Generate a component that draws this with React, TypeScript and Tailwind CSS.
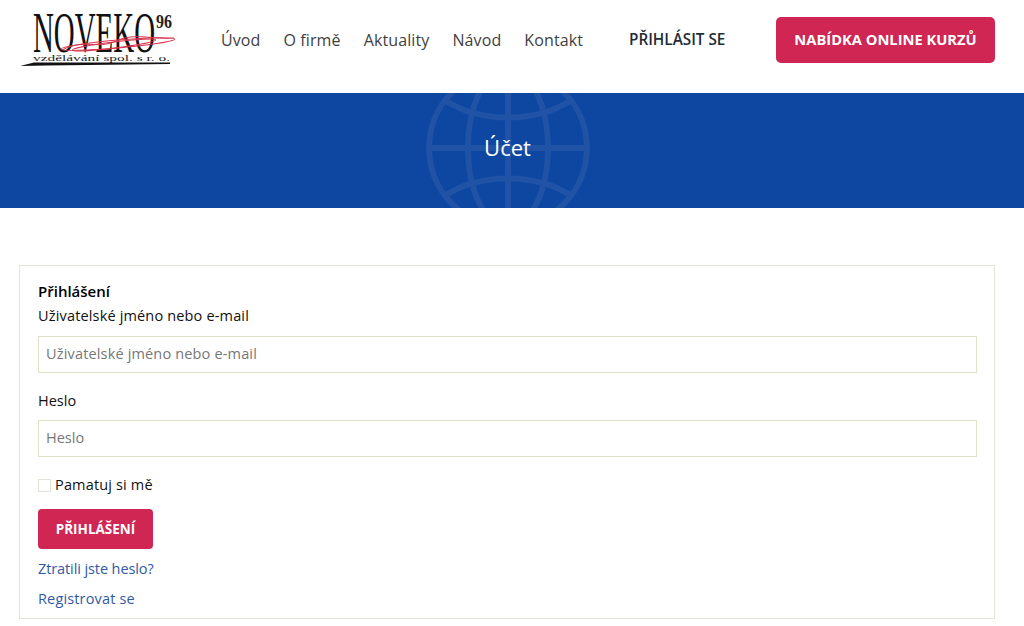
import React from "react";

const font = { fontFamily: '"Open Sans", sans-serif' };

const Logo = () => (
  <svg width="160" height="56" viewBox="0 0 160 56" className="block shrink-0">
    <text x="17" y="40" fontFamily="Liberation Serif" fontSize="58" textLength="122" lengthAdjust="spacingAndGlyphs" fill="#111">NOVEKO</text>
    <g fill="none" stroke="#d8324c" strokeWidth="1">
      <ellipse cx="102" cy="32" rx="57" ry="4" transform="rotate(-5 102 32)" />
      <ellipse cx="98" cy="33" rx="42" ry="3" transform="rotate(-7 98 33)" />
      <path d="M46 38 C70 26 80 38 100 29 S135 28 158 26" />
    </g>
    <text x="140" y="16" fontFamily="Liberation Serif" fontWeight="700" fontSize="18" textLength="16" lengthAdjust="spacingAndGlyphs" fill="#222">96</text>
    <text x="17" y="49" fontFamily="Liberation Serif" fontSize="9" textLength="137" lengthAdjust="spacingAndGlyphs" fill="#222">vzdělávání spol. s r. o.</text>
    <path d="M4 54 L18 50.5 L154 50.5 L154 52 L30 53.5 Z" fill="#111" />
  </svg>
);

const Globe = () => (
  <svg width="164" height="115" viewBox="0 0 164 115" fill="none" stroke="#2052a5" strokeWidth="6" className="absolute left-[426px] top-0">
    <circle cx="82" cy="55" r="79" />
    <ellipse cx="82" cy="55" rx="40" ry="79" />
    <path d="M82 -24V134M3 55H161" />
    <path d="M20 8C55 30 109 30 144 8M20 102C55 80 109 80 144 102" />
  </svg>
);

const navItems = ["Úvod", "O firmě", "Aktuality", "Návod", "Kontakt"];

export default function App() {
  return (
    <div className="min-h-screen overflow-hidden bg-white text-[#111]" style={font}>
      <header className="flex h-[93px] items-center pb-[14px] pl-[16px]">
        <Logo />
        <nav className="ml-[45px] flex w-[362px] justify-between text-[16px] tracking-[0.1px] text-[#3f3f3f]">
          {navItems.map((item) => (
            <a key={item} href="#">{item}</a>
          ))}
        </nav>
        <a href="#" className="ml-[46px] w-[96px] whitespace-nowrap text-[15.3px] font-semibold text-[#222b36]">PŘIHLÁSIT SE</a>
        <a href="#" className="ml-[51px] flex h-[46px] w-[219px] items-center justify-center rounded-[5px] bg-[#cf2654] text-[14.7px] font-bold text-white">NABÍDKA ONLINE KURZŮ</a>
      </header>

      <section className="relative flex h-[115px] items-center justify-center overflow-hidden bg-[#0d47a1] pb-[6px] pr-[9px]">
        <Globe />
        <h1 className="relative text-[22px] text-white">Účet</h1>
      </section>

      <main className="px-[19px] pt-[57px]">
        <div className="h-[354px] w-[976px] border border-[#e3e3d8] pl-[18px] pr-[17px] pt-[15px] text-[14.5px]">
          <h2 className="text-[15px] font-semibold leading-5 text-black">Přihlášení</h2>
          <label className="mt-[5px] block leading-5 tracking-[0.16px]">Uživatelské jméno nebo e-mail</label>
          <input className="mt-[10px] block h-[37px] w-full border border-[#e2e2c8] px-[7px] pb-[2px] tracking-[0.16px] outline-none placeholder:text-[#777]" placeholder="Uživatelské jméno nebo e-mail" />
          <label className="mt-[18px] block leading-5">Heslo</label>
          <input className="mt-[9px] block h-[37px] w-full border border-[#e2e2c8] px-[7px] pb-[2px] outline-none placeholder:text-[#777]" placeholder="Heslo" />
          <div className="mt-[18px] flex h-5 items-center gap-[4px]">
            <span className="h-[13px] w-[13px] border border-[#e2e2d8] bg-white" />
            <span className="tracking-[0.16px]">Pamatuj si mě</span>
          </div>
          <button className="mt-[14px] block h-[40px] w-[115px] rounded-[4px] bg-[#cf2654] text-[13.5px] font-bold text-white">PŘIHLÁŠENÍ</button>
          <a href="#" className="mt-[10px] block leading-5 tracking-[-0.1px] text-[#2f5aa8]">Ztratili jste heslo?</a>
          <a href="#" className="mt-[10px] block leading-5 tracking-[0.15px] text-[#2f5aa8]">Registrovat se</a>
        </div>
      </main>
    </div>
  );
}
